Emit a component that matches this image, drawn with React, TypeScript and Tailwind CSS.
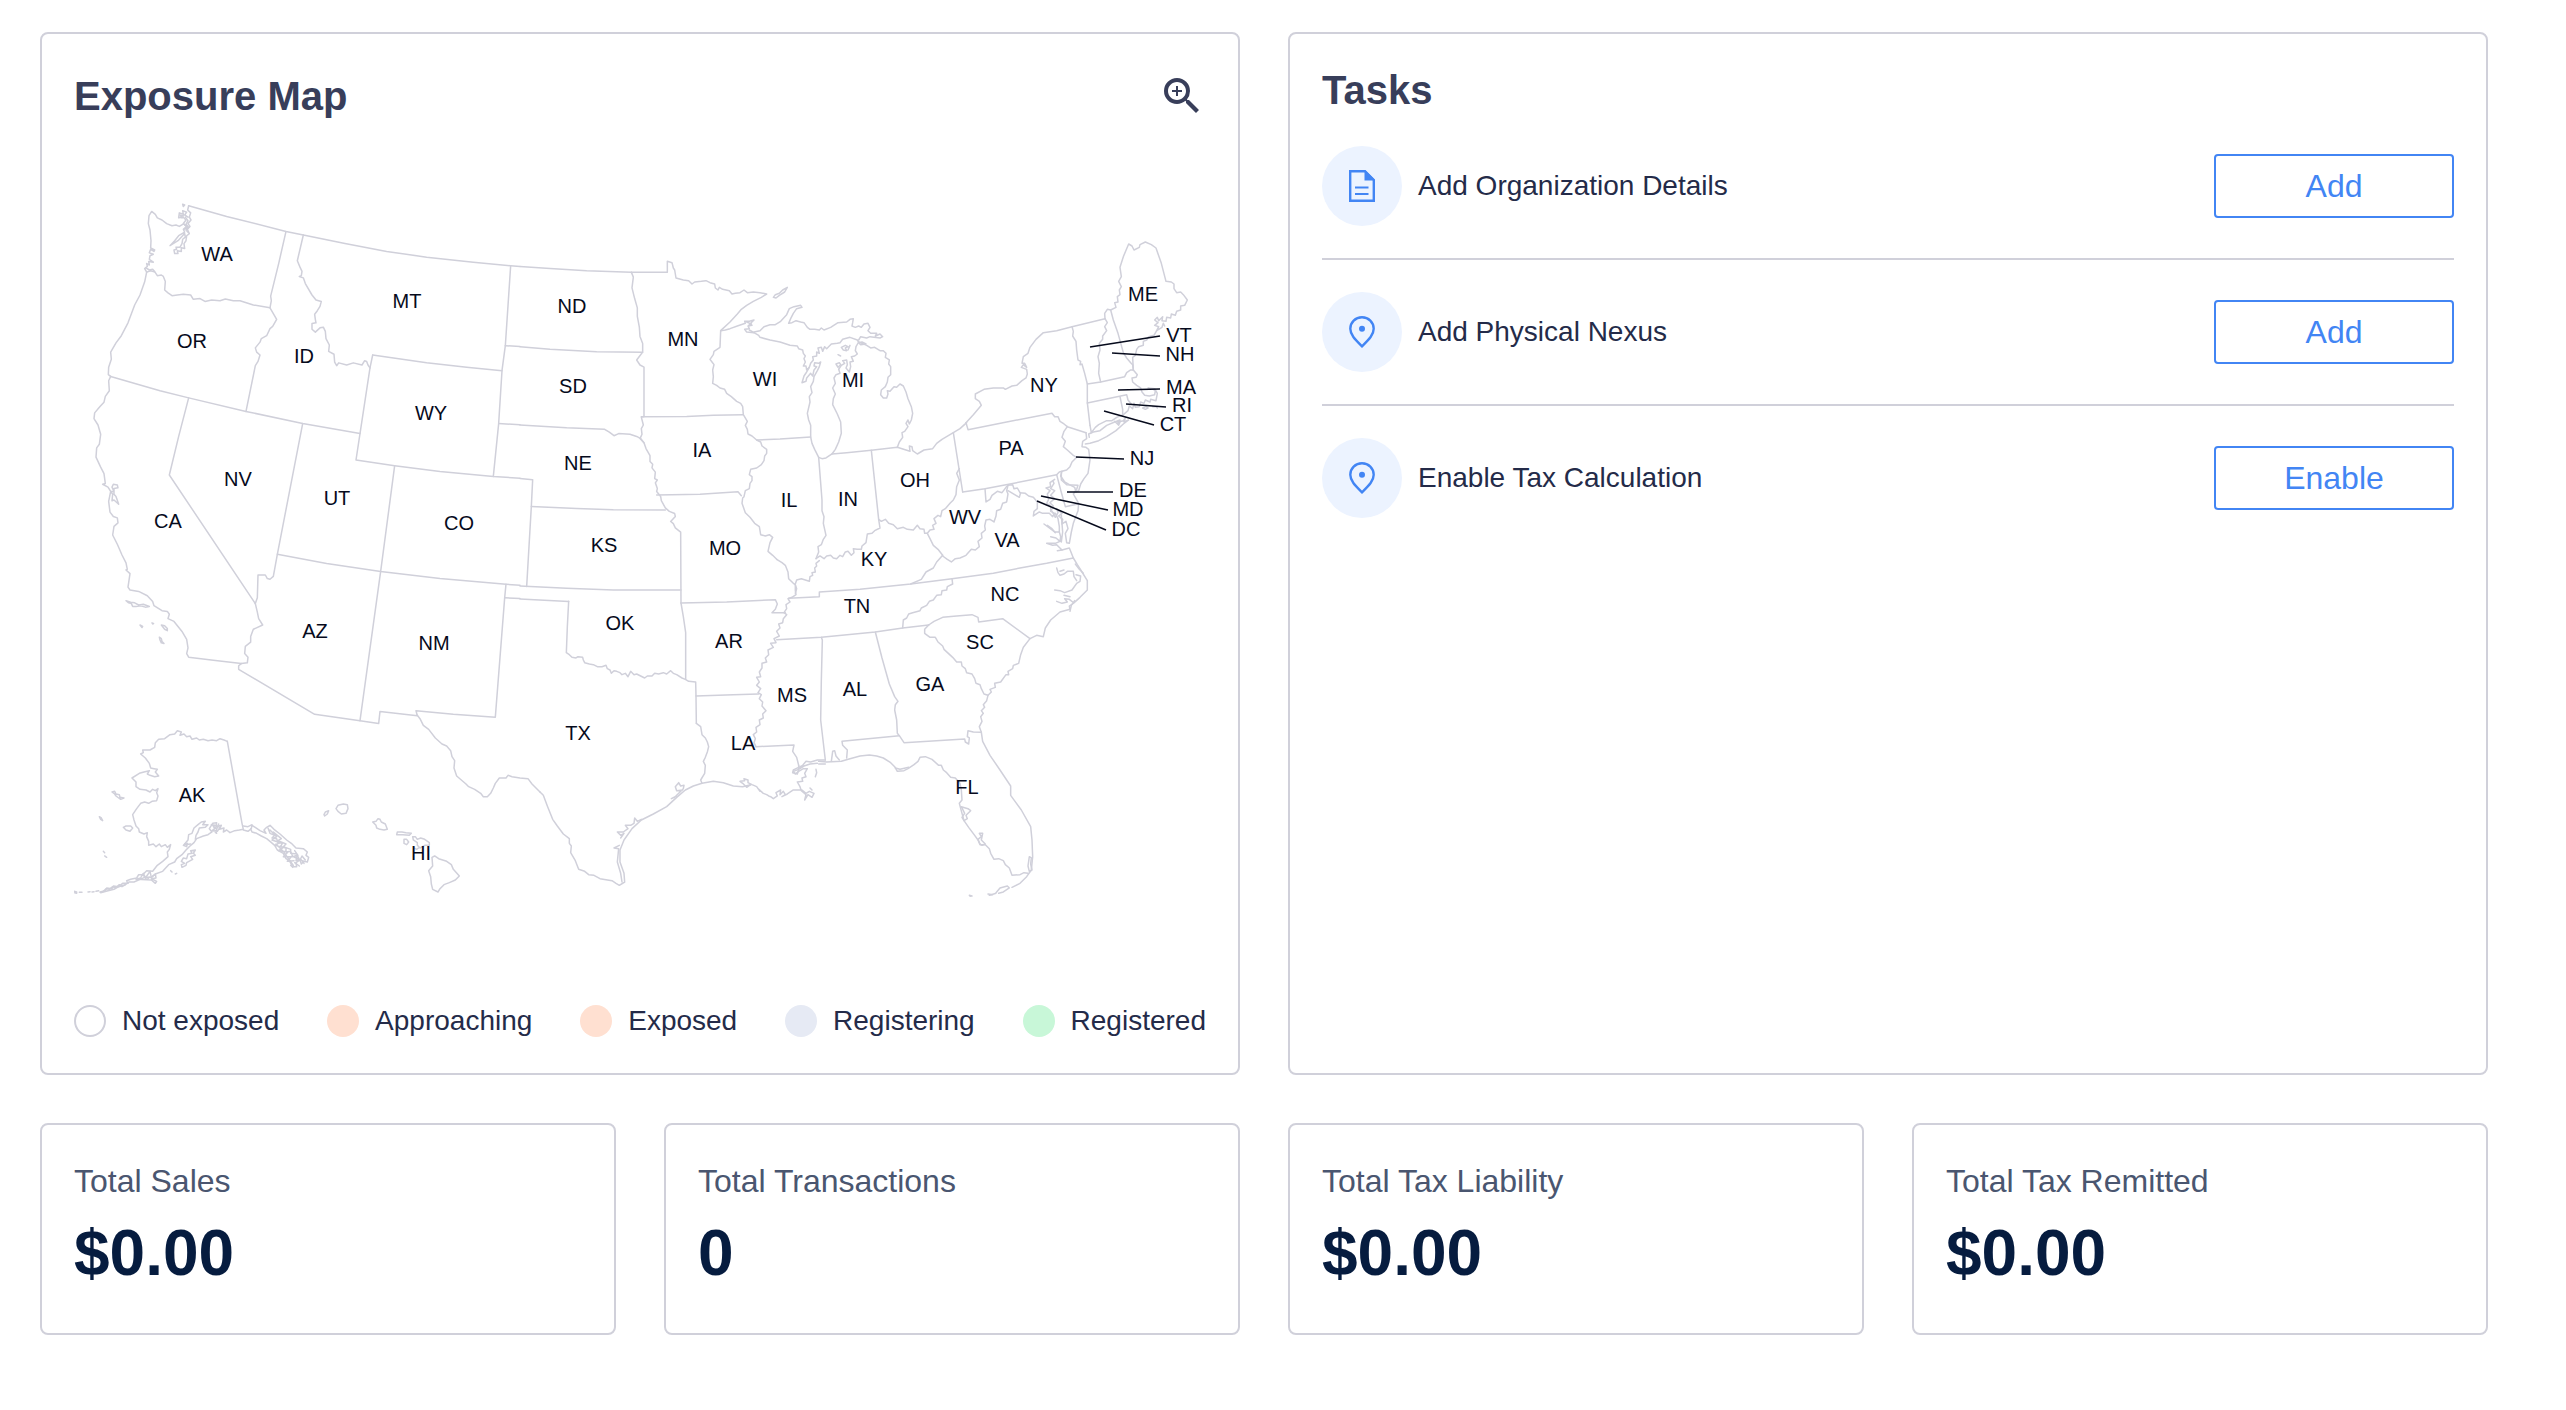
import type { ReactNode } from "react"
import { MdZoomIn } from "react-icons/md"

type Region = {
  name: string
  transform: string
  paths: string[]
}

type StateLabel = [code: string, x: number, y: number]

// Each region is drawn on its own grid and placed on the map by its transform.
const regions: Region[] = [
  {
    name: "west",
    transform: "matrix(0.33333 0 0 0.35714 40 180)",
    paths: [
      "M320 258L314 248 322 242 320 234 328 238 326 228 340 230 328 222 330 212 340 208 328 204 332 194 342 200 344 196 332 190 333 170 330 140 325 122 327 100 335 88 346 96 352 106 366 112 380 122 396 128 408 126 418 130 428 124",
      "M446 72L560 102 738 144 790 154 915 178 1040 200 1160 216 1300 230 1412 240 1440 242",
      "M446 72L443 84 452 92 448 104 453 112 444 122 450 130 442 138 448 150 440 156 438 170 432 178 434 192 424 190 424 200 412 198 414 206 404 206 402 196 410 194 408 188 420 188 426 178 428 166 436 160 434 150 414 170 390 184 404 170 416 156 434 146 430 138 440 130 430 122 438 112 430 104 416 106 418 92 430 96 428 86 440 90 434 98 444 104",
      "M428 68l6 2 -4 4zM420 98l10 2 -4 6zM436 104l8 10 -6 10 8 8 -8 8 6 6M432 124l10 8 -10 6",
      "M320 258L332 254 345 258 352 268 364 266 370 270 376 284 374 308 384 316 396 324 412 322 430 320 452 322 460 334 480 332 495 340 515 336 540 338 556 333 580 338 600 338 640 350 690 358",
      "M318 246l10 6 10 -2 6 6",
      "M738 144L716 234 692 325 694 338 690 358 700 374 710 390 698 410 690 416 680 436 664 444 660 454 646 470 650 482 660 490 654 508 646 520 618 648",
      "M320 258L314 285 300 322 284 350 264 400 244 436 228 456 212 482 214 502 206 524 205 545 212 550",
      "M212 550L360 590 446 610 618 648 788 682 960 710",
      "M212 550L206 562 208 590 196 606 192 622 180 634 164 652 162 668 174 686 182 712 178 740 170 750 168 776 182 804 192 822 196 850 188 852 204 860 212 872 206 900 210 930 220 942 232 946 234 960 222 970 218 994 232 1020 246 1050 258 1072 262 1090 258 1092 270 1102 264 1140 270 1148 296 1152 322 1164 338 1180 342 1192 366 1206 382 1208 388 1216 384 1228 402 1236 426 1264 440 1286 444 1310 440 1326 446 1336 520 1345 604 1354",
      "M212 872L222 872 216 860 220 852 232 854 234 862 222 864 222 880 228 886 236 908 222 896 216 898 218 880z",
      "M258 1178L272 1182 284 1184 296 1190 310 1188 328 1194 316 1196 302 1192 288 1194 278 1194 274 1186 266 1184z",
      "M300 1246l8 4 -2 3zM336 1240l5 2 -3 1zM364 1246l10 2 8 8 0 6 -8 -4zM358 1280l6 4 2 8 6 6 -8 -2 -4 -8z",
      "M446 610L416 718 388 826 646 1186",
      "M646 1186L652 1170 654 1106 676 1106 682 1116 690 1118 700 1110 712 1048 788 682",
      "M646 1186L652 1210 656 1228 668 1246 640 1258 632 1278 632 1294 616 1306 614 1326 624 1336 622 1352 604 1354 596 1360 596 1370 824 1496 960 1514 1016 1522 1020 1488 1132 1500 1128 1486 1240 1496 1366 1504 1394 1170 1398 1132",
      "M712 1048L860 1074 1022 1096 1200 1116 1398 1132 1440 1135",
      "M1064 800L1022 1096 960 1514",
      "M998 490L990 526 960 710 948 784 1064 800 1200 816 1360 830 1440 835",
      "M998 490L1160 512 1280 524 1386 534",
      "M1412 240L1396 464 1386 534 1376 682 1360 830",
      "M1396 464L1440 466M1376 682L1440 685M1394 1170L1440 1172",
      "M790 154L772 226 780 244 786 256 784 268 778 270 790 274 796 290 816 322 828 336 844 340 840 354 832 366 824 376 826 390 828 400 816 402 816 418 826 426 840 414 850 412 856 424 858 444 868 462 866 480 882 488 884 510 890 520 896 512 920 518 940 512 966 518 974 506 980 508 984 518 990 526",
    ],
  },
  {
    name: "plains",
    transform: "matrix(0.33333 0 0 0.35714 500 220)",
    paths: [
      "M60 130L150 136 260 142 394 146 502 146",
      "M60 355L150 362 290 369 428 370",
      "M394 146L400 160 396 190 404 220 412 246 412 270 418 300 420 326 428 346 428 370 418 382 410 392 420 406 432 412 432 550",
      "M424 551L560 550 640 547 728 545",
      "M60 574L200 582 314 586 328 594 342 604 356 598 390 600 410 606 422 612 432 624",
      "M432 550L424 552 430 574 424 584 426 600 420 612 432 624 438 640 450 660 450 676 458 684 456 694 466 706 464 724 472 728 466 736 472 752 470 760 482 774 484 786 496 806 508 816 524 822 526 830 512 844 520 850 526 862 542 874 543 1072",
      "M60 724L98 727 94 802 80 1026",
      "M94 802L230 808 340 811 496 812",
      "M60 1025L200 1031 340 1036 543 1036",
      "M60 1061L206 1068",
      "M470 770L600 768 714 761 724 772",
    ],
  },
  {
    name: "south",
    transform: "matrix(0.33333 0 0 0.33333 500 560)",
    paths: [
      "M206 124L202 200 199 278 208 284 216 292 228 294 234 290 248 292 250 300 254 308 268 312 280 314 292 320 306 320 318 316 322 326 330 330 334 340 342 332 350 334 360 338 366 344 376 340 384 350 392 334 402 344 410 342 422 348 434 354 442 348 456 348 464 340 476 342 490 338 500 342 512 332 520 340 530 344 546 354 556 358 566 364 587 366 588 408 589 490",
      "M543 129L550 170 557 218 557 358",
      "M588 408L700 404 776 402",
      "M589 490L602 500 606 524 616 534 622 546 626 560 622 576 616 592 610 604 616 616 614 640 602 660 606 670",
      "M543 129L680 126 826 119 832 132 826 148 816 158 856 158",
      "M886 74L886 92 888 104 876 112 864 116 870 126 858 134 860 146 852 158 860 164 850 176 848 188 836 192 840 204 830 214 838 228 822 236 828 248 812 250 820 262 804 270 806 284 796 294 800 306 786 310 786 324 778 336 782 350 770 352 778 366 770 376 782 386 774 398 784 404 778 416 788 426 786 438 798 452 788 462 790 474 778 480 780 494 768 502 770 516 760 524 766 536 762 548 768 560",
      "M768 560L882 555 878 574 890 592 896 616",
      "M120 696L130 706 142 738 158 778 172 798 190 822 208 836 208 850 214 858 212 878 226 902 236 928 254 934 266 944 282 946 300 956 336 962 348 970 358 976 374 966 372 940 360 906 360 870 372 840 396 806 424 780 460 762 500 740 530 712 556 690 580 678 606 670 640 664 670 668 700 678 728 680 752 674",
      "M548 690L530 692 526 680 536 668 542 678 552 676 550 686 524 712 514 716 530 708",
      "M424 778L412 784 404 774 402 790 392 796 376 796 384 806 370 816 352 816 362 826 372 820 362 834",
      "M358 856L342 864 356 866 352 906 362 940 366 966",
      "M752 674L740 682 728 670 720 664 734 662 732 656 744 660 744 668 756 674 770 680 780 694 774 686 790 700 800 704 806 708 812 710 820 716 832 708 828 698 842 690 840 704 850 694 856 704 846 710 862 702 880 690 906 690 918 700 928 694 942 700 936 712 924 704 914 720 918 704 904 692 900 680 892 666 908 664 906 654 918 650 914 640 922 626 910 626 896 634 886 642 880 634 896 628 896 616",
      "M948 628l2 10 -4 12M930 684l6 6",
    ],
  },
  {
    name: "southeast",
    transform: "matrix(0.33333 0 0 0.33333 760 540)",
    paths: [
      "M50 299L184 292 346 276 428 264 506 255",
      "M86 175L178 170 178 156 300 148 452 132 576 116 700 100 780 84 860 70 940 54",
      "M50 58L66 68 76 76 84 96 86 116 100 130 106 134 110 146 106 160",
      "M106 132L110 120 124 116 148 124 150 110 158 106 156 98 166 96 164 84 170 78 168 70 178 62",
      "M452 132L484 118 498 96 520 84 530 66 548 46",
      "M576 116L578 132 562 140 560 150 546 152 544 164 530 166 520 180 508 184 500 196 484 204 480 212 458 218 446 222 440 234 430 240 428 264",
      "M506 255L522 244 548 232 590 228 636 224 654 232 656 246 728 236 810 296",
      "M506 255L494 268 494 280 510 292 526 292 534 306 548 318 552 328 578 352 590 366 604 366 606 378 616 386 620 398 636 402 644 416 648 430 660 434 664 446 672 462 684 466",
      "M346 276L366 354 388 432 404 470 414 484 406 494 404 510 410 540 412 580 418 587 432 608 614 597 616 606 626 612 628 594 622 590 624 572 640 576 664 577",
      "M418 587L246 604 248 616 262 630 260 654",
      "M184 292L187 300 184 420 182 540 196 660",
      "M664 577L658 560 666 544 662 530 670 520 664 512 674 502 670 494 680 482 684 466 694 456 690 448 706 442 704 430 722 426 738 404 746 404 744 394 758 386 760 376 776 370 782 344 790 322 810 296 830 286 850 290 856 264 872 240 900 216 930 208 928 198 940 190 960 172 982 150 982 122 966 96 952 74 940 54",
      "M930 214L934 196 944 182M946 72L958 88 970 100",
      "M890 84L894 98 900 106 912 102 922 94 940 94M900 94L912 90M940 94L942 110 950 122M884 150L900 152 914 158 936 150 950 130 960 124 962 108 948 104M890 184L906 190 922 186 914 176 928 178 938 186M912 166L930 170",
      "M664 577L668 604 690 646 720 690 752 738 752 766 784 810 812 860 816 900 818 950 814 990 800 1010 780 1030 756 1042",
      "M808 950l6 4 -2 18 4 18 -8 4 -4 -16z",
      "M804 1000L792 998 780 1004 756 1006 748 984 736 974 730 962 716 956 702 958 692 940 688 926 676 914 660 914 654 900 644 886 626 862 612 842 606 820 598 790 606 780 604 750 600 730 586 714 572 712 560 698 550 690 544 676 536 676 516 658 496 650 480 652 474 664 462 674 444 686 432 692 412 694 404 680 392 668 370 654 350 648 328 645 300 648 270 656 244 664 200 666 176 664",
      "M406 684L420 688 446 682M612 842L606 832 614 820 604 800 624 806 632 812 618 826 622 836 612 842",
      "M660 912L654 898 664 890 658 880 668 880 664 900 676 912 666 916z",
      "M708 1058L720 1044 742 1038 748 1044 730 1056 716 1060M684 1062l14 2 -10 2M628 1066l8 2 -6 1M694 1064l14 -4",
      "M214 664L218 634 224 632 228 648 238 660M196 660L172 660 152 666 138 664 128 676 116 682 100 690 98 698 112 702 116 688 132 678 150 672 172 670M176 672l20 0",
    ],
  },
  {
    name: "lakes",
    transform: "matrix(0.33333 0 0 0.33333 620 240)",
    paths: [
      "M142 95L142 64 156 68 160 84 164 90 168 114 190 120 206 122 216 132 224 126 244 124 258 122 270 128 284 132 286 144 294 150 298 142 308 148 318 150 328 152 336 162 346 160 360 158 372 150 382 158 400 156 420 158 440 162 424 172 400 184 380 196 364 208 352 222 330 246 302 272",
      "M460 172L466 164 478 160 488 150 502 142 494 156 478 166 468 174z",
      "M302 272L316 270 330 266 352 258 376 250 374 244 388 244 402 240 392 250 396 256 384 258 388 266 374 268 380 276 402 278",
      "M380 246l10 4 -4 8 8 -6",
      "M388 270L402 278 416 286 420 292 450 300 480 306 510 316 532 318 536 326 548 330 550 340 556 348 552 356 556 366 550 378 558 378 560 390 568 382 572 370 580 360 578 350 590 348 590 336 598 340 594 324 604 322 608 334 614 320 620 326 634 312 652 310 660 308 668 298 690 292 712 300 718 310",
      "M568 382L560 396 552 408 546 428 558 424 560 414 572 400 578 408 582 390 590 380 582 378 584 368 596 370 602 366 598 380 592 392 582 410 580 424 572 440 576 458 568 470 570 486 562 520 566 540 572 556 572 591 576 610 584 628 596 652 606 656 618 654 636 642 646 628 656 606 664 580 662 546 652 522 638 494 640 476 646 462 638 444 646 430 642 414 648 404 660 400 656 388",
      "M402 276L420 272 432 260 450 254 466 254 482 244 500 224 508 206 522 200 542 196 546 202 530 206 520 220 512 236 506 250 516 248 528 242 542 246 552 248 562 262 570 268 584 268 598 270 604 264 612 270 632 262 654 248 680 246 690 238 700 236 698 248 696 258 706 262 716 258 724 262 732 252 744 250 750 262 744 272 752 280 770 280 766 288 780 282 788 290 780 294 750 290 740 294 722 290 716 300",
      "M664 322l12 -6 8 4 -8 4 4 8 -10 -2zM654 344l8 4M648 372l10 -4 4 6 -8 8zM690 316l-6 14",
      "M656 388L664 376 674 370 668 362 680 360 682 374 678 384 688 396 692 380 690 366 700 364 694 350 704 348 712 342 706 332 708 320 716 306 726 310 740 316 752 324 764 322 780 332 790 332 798 340 796 352 808 360 806 372 812 380 812 404 804 412 802 426 796 440 784 450 782 464 790 474 800 474 804 462 802 452 810 454 822 440 830 442 840 432 850 438 858 456 864 476 874 500 878 520 874 540 868 552 864 540 858 550 864 560 854 574 846 578 848 592 838 606 832 622",
      "M716 308l10 -2 12 6 -16 2z",
      "M636 642L680 638 754 631 832 622 846 626 858 630 870 634 868 618 876 620 878 632 892 642 912 630 938 626 950 610 966 598 1000 578 1020 566 1040 548",
      "M302 272L300 322 282 334 280 344 270 358 276 366 282 374 278 390 280 410 278 430 290 436 300 444 314 448 320 460 334 470 350 484 362 490 368 500 370 524",
      "M370 524L382 544 376 556 382 568 384 582 396 588 410 600 422 606 426 618 440 628 440 640 434 648 432 662 424 674 410 684 392 688 388 704 396 710 396 722 390 730 388 746 376 752 372 770 368 774 366 790 376 818 390 832 404 850 418 860 422 884 436 888 448 884 458 892 450 908 444 934 458 946 470 958",
      "M596 652L606 780 606 812 612 830 610 850 618 886 610 898 604 914 594 920 596 936 588 956",
      "M588 956L600 948 612 956 620 948 632 946 640 954 650 956 660 946 668 950 676 936 684 934 694 946 702 938 700 926 712 928 724 928 726 918 738 908 742 882 756 880 764 872 780 864 776 838",
      "M754 631L776 838 784 844 796 838 806 850 820 854 832 866 850 862 862 868 880 870 892 856 900 866 912 868 914 880 922 880",
      "M410 600L480 597 572 591",
      "M922 880L930 896 940 916 954 928 968 946",
      "M922 880L930 870 942 868 938 856 948 850 942 836 954 826 962 830 966 812 976 806 990 790 1000 780 1008 764 1010 740 1018 720 1010 700 1018 686",
      "M1000 578L1028 756",
    ],
  },
  {
    name: "northeast",
    transform: "matrix(0.33333 0 0 0.33333 860 220)",
    paths: [
      "M308 816L375 806 450 792 590 764",
      "M318 608L324 629 440 606 576 580 584 590 594 590 600 604 612 612 622 620 678 638",
      "M318 608L340 584 352 570 364 556 358 544 346 536 346 522 372 508 400 504 430 504 436 508 456 498 470 496 486 482 498 474 502 462 500 448 484 442 490 434 500 442 494 430 486 430 490 410 504 400 510 382 528 358 550 338 590 332 636 320 735 296",
      "M636 320L640 334 638 348 648 364 650 390 654 420 662 424 660 434 666 432 674 460 682 492 682 548 690 616",
      "M735 296L742 308 734 320 740 332 728 348 728 358 718 370 720 390 714 410 718 430 716 460 722 486",
      "M735 296L734 280 742 268 752 270 760 300 774 340 790 398 800 414 812 428 818 434 820 450",
      "M752 270L768 262 764 248 774 246 772 230 780 224 778 210 784 200 776 184 784 170 780 142 790 110 806 72 816 78 822 90 838 82 840 74 856 66 874 74 888 84 904 130 918 184 934 186 942 192 942 206 950 218 962 216 970 224 982 240 974 256 962 258 962 270 950 274 946 286 934 282 932 294 920 292 918 304 906 302 908 290 896 302 892 292 884 300 894 308 884 316 896 320 890 332 906 322 910 310 914 318",
      "M890 332L882 346 866 350 860 360 850 364 850 376 836 380 830 388 826 406 818 412 820 450",
      "M682 492L722 486 794 470 800 458 812 450 820 450",
      "M682 549L800 524 804 540 814 552",
      "M780 530L788 568 788 586",
      "M820 450L832 464 828 472 816 474 818 486 830 496 842 504 846 516 854 526 868 528 884 524 886 512 876 506 864 504 884 506 892 520 888 542 872 538 870 546 856 540 852 550 842 546 838 560 826 562 822 550 818 566 808 558 804 572 790 584 770 592 756 602 740 602 716 614 706 622 694 638 690 616",
      "M848 564l10 -4 6 4 -8 4zM878 560l10 0 4 4",
      "M688 652L686 642 700 636 720 632 740 616 764 606 780 600 774 606 790 602 796 594 792 606 806 600 790 612 768 632 740 650 716 662 690 670 676 672",
      "M764 604l6 6 10 -4 -4 10z",
      "M678 638L680 656 668 664 666 680 678 682 686 688 690 720 684 760 672 776 662 792 656 812 648 816 644 802 628 794 614 786 602 768 606 754 620 750 630 740 636 726 650 712 640 706 622 690 610 680 616 664 606 652 612 634 622 620",
      "M590 764L598 756 606 754M590 764L602 810 616 860 654 852",
      "M604 758L604 780 620 794 654 796 650 808 640 822 648 836 656 850 654 872 640 910 634 936 628 970 620 968 616 940 624 926 618 904 606 912 608 898 596 888 606 880 590 866 594 878 586 892 574 870 580 858 570 848 584 836 572 826 584 812 572 806 582 790 578 782",
      "M584 778L570 788 572 800 558 804 570 812 562 822 566 838 560 850 572 858 572 874 584 880 578 890 568 880 548 880 538 876 520 888 522 874 532 866 532 846 520 832 506 828 496 820 480 818 472 804 462 806 458 794 444 796",
      "M586 880L594 896 598 920 598 936 584 936 566 922 552 912",
      "M562 916l14 10 10 12",
      "M598 936L602 950 600 964 588 954 572 950M600 964L586 970 560 970 578 976 590 974 606 990 592 992M604 886l4 50 -4 30",
      "M606 990L628 984 640 1014",
      "M375 806L378 846 390 838 396 826 412 814 426 818 438 802 444 796",
      "M444 796L440 812 444 822 440 846 428 850 422 868 410 872 408 888 402 906 390 898 378 900 374 918 376 930 364 940 366 954 354 964 358 980 346 990 334 988 318 1006 300 1014 286 1016 274 1026 262 1018 248 1008",
      "M444 812L478 832 482 818",
    ],
  },
  {
    name: "noncontiguous",
    transform: "matrix(0.33333 0 0 0.33333 40 700)",
    paths: [
      "M1132 46L1140 56 1150 76 1166 88 1186 114 1206 132 1220 138 1232 152 1236 170 1244 182 1242 204 1250 228 1278 252 1286 260 1304 268 1322 280 1330 290 1342 290 1352 280 1360 264 1366 250 1378 234 1398 234 1404 226 1416 230 1440 234 1464 236 1476 252 1500 276",
      "M562 124L552 120 540 116 530 122 516 120 504 122 490 118 478 120 470 114 456 118 450 108 440 110 432 102 420 106 424 96 412 92 404 102 390 104 374 116 356 118 346 128 344 142 330 150 308 150 310 158 302 162 316 174 328 190 332 204 342 206 352 208 346 216 356 228 344 230 330 226 322 222 328 212 312 216 298 220 276 234 288 246 288 260 300 268 318 270 330 276 338 268 346 272 354 266 350 278 354 288 350 302 336 304 326 310 314 306 302 310 290 326 278 344 282 360 288 378 296 386 298 396 312 402 322 398 320 410 326 424 326 436 340 432 348 440 358 432 364 440 376 434 382 442 392 434 388 448 382 456 384 470 368 484 352 496 338 514 320 512 308 524 296 524 290 534 272 538 260 542 264 550 248 550 236 560 220 558 216 566 200 564 196 572 180 576",
      "M182 578L204 572 222 568 236 560 256 554 268 546 282 546 300 538 314 532 334 532 346 522 368 514 386 494 404 486 410 476 426 464 438 450 450 438 462 428 470 416 490 408 504 404 516 396 508 386 518 370 530 368 528 380 544 376 538 388 552 384 550 396 560 390 570 398 584 392 598 390 610 388 606 370 562 124",
      "M452 432L432 434 444 420 446 404 456 400 462 384 474 374 484 366 496 364 488 374 504 374 496 382 478 384 474 396 468 406 466 418",
      "M430 436l12 -6 -2 10zM514 374l14 10 -12 8 16 2 8 -12 -14 -6zM520 378l10 22M536 372l-10 26",
      "M424 484L430 474 440 476 444 462 456 460 452 452 466 450 460 460 466 466 452 470 458 478 440 488 438 496 426 502 424 494 434 490z",
      "M190 574l8 -8 10 2 10 -8 8 4 12 -10 8 6 10 -6M288 538l14 -4 6 -12 8 12 14 -20 4 18 12 -10 2 12 -14 2 16 8 -4 6 -12 -10zM310 520l10 20 8 -8",
      "M102 574l8 2 0 4 -6 -2M118 577l8 0M144 576l6 -1M156 576l6 -1M168 574l8 -2M392 512l4 4M406 522l4 -2",
      "M216 276l8 -2 4 8 10 2 2 8 12 2 -10 4 -6 -4 -8 -6 -4 -6zM178 350l6 4 4 8 -6 -4zM250 382l8 -4 14 0 6 6 -8 10 -12 -4zM190 454l4 4M194 468l6 4",
      "M610 378L624 380 636 374 634 386 624 394 610 390M636 376L648 384 660 392 678 400 672 390 680 382 690 376 702 388 720 402 740 420 754 430 768 444 790 446 802 456 798 466 806 472 802 486 792 484 784 492 780 480 768 488 770 500 758 500 748 482 738 476 730 460 712 450 704 436 690 424 680 416 664 408 650 400 636 396 632 386",
      "M684 384l6 16 14 6 -8 8 14 2 4 14 14 -2 -6 12 16 4 0 12 14 -2 6 16 14 -4 -4 16 14 -4 10 12M690 390l20 20 -14 10 24 8 -16 8 26 6 -14 10 28 4 -14 14 24 0 -12 14 20 -2M700 396l24 20 -10 6 24 10 -8 8 22 8 0 12 18 2 8 16 14 6M708 432l20 20 16 22 16 22M764 452l10 14 -14 4 20 10 6 -12 10 12M752 496l6 6M764 488l14 10",
      "M852 344l4 -8 10 -4 -4 10 -8 6zM888 326l6 -10 16 -4 12 2 2 12 -6 14 -14 2 -10 -8z",
      "M998 366l10 -2 6 -8 6 2 4 8 12 6 6 16 -10 2 -12 -2 -10 -4 -2 -8zM1072 396l14 0 12 2 16 2 -6 6 -20 -2 -18 0zM1092 418l8 0 6 8 -6 8 -8 -4zM1118 410l8 0 6 8 10 -4 12 4 14 10 0 8 -14 0 -14 8 -8 -8 0 -8 -12 -8z",
      "M1122 444l8 4 6 -4 M1176 472L1184 468 1196 476 1220 484 1234 494 1240 508 1258 528 1246 540 1228 548 1212 554 1200 566 1194 576 1178 568 1174 552 1172 530 1166 512 1178 498z",
    ],
  },
]

const stateLabels: StateLabel[] = [
  ["WA", 217, 261],
  ["OR", 192, 348],
  ["ID", 304, 363],
  ["MT", 407, 308],
  ["WY", 431, 420],
  ["NV", 238, 486],
  ["UT", 337, 505],
  ["CO", 459, 530],
  ["CA", 168, 528],
  ["AZ", 315, 638],
  ["NM", 434, 650],
  ["ND", 572, 313],
  ["SD", 573, 393],
  ["NE", 578, 470],
  ["KS", 604, 552],
  ["OK", 620, 630],
  ["TX", 578, 740],
  ["MN", 683, 346],
  ["IA", 702, 457],
  ["MO", 725, 555],
  ["AR", 729, 648],
  ["LA", 743, 750],
  ["WI", 765, 386],
  ["IL", 789, 507],
  ["IN", 848, 506],
  ["MI", 853, 387],
  ["OH", 915, 487],
  ["KY", 874, 566],
  ["TN", 857, 613],
  ["MS", 792, 702],
  ["AL", 855, 696],
  ["GA", 930, 691],
  ["FL", 967, 794],
  ["SC", 980, 649],
  ["NC", 1005, 601],
  ["VA", 1007, 547],
  ["WV", 965, 524],
  ["PA", 1011, 455],
  ["NY", 1044, 392],
  ["ME", 1143, 301],
  ["AK", 192, 802],
  ["HI", 421, 860],
  ["VT", 1179, 342],
  ["NH", 1180, 361],
  ["MA", 1181, 394],
  ["RI", 1182, 412],
  ["CT", 1173, 431],
  ["NJ", 1142, 465],
  ["DE", 1133, 497],
  ["MD", 1128, 516],
  ["DC", 1126, 536],
]

// Lines from the small eastern states out to their labels.
const leaders = [
  "M1090 347L1160 336",
  "M1112 353L1160 356",
  "M1118 390L1160 389",
  "M1126 404L1166 407",
  "M1104 411L1154 425",
  "M1076 457L1124 459",
  "M1067 492L1113 492",
  "M1041 496L1108 510",
  "M1037 501L1106 530",
]

const legend = [
  { label: "Not exposed", dot: "border-2 border-[#d0d0da] bg-white" },
  { label: "Approaching", dot: "bg-[#ffe0d1]" },
  { label: "Exposed", dot: "bg-[#ffe0d1]" },
  { label: "Registering", dot: "bg-[#e6eaf4]" },
  { label: "Registered", dot: "bg-[#c8f7d8]" },
]

const tasks = [
  { title: "Add Organization Details", action: "Add", icon: <DocumentIcon /> },
  { title: "Add Physical Nexus", action: "Add", icon: <PinIcon /> },
  { title: "Enable Tax Calculation", action: "Enable", icon: <PinIcon /> },
]

const stats = [
  { label: "Total Sales", value: "$0.00" },
  { label: "Total Transactions", value: "0" },
  { label: "Total Tax Liability", value: "$0.00" },
  { label: "Total Tax Remitted", value: "$0.00" },
]

function DocumentIcon() {
  return (
    <svg viewBox="0 0 26 32" className="w-[26px] h-8" fill="none" stroke="currentColor" strokeWidth="2.4" aria-hidden="true">
      <path d="M1.2 1.2H16L24.8 10V30.8H1.2Z" />
      <path d="M6 17.5H19.5M6 24H19.5" strokeWidth="2.2" />
      <path d="M15.5 0.5V10.5H25.5V9.5L16.5 0.5Z" fill="currentColor" stroke="none" />
    </svg>
  )
}

function PinIcon() {
  return (
    <svg viewBox="0 0 26 32" className="w-[26px] h-8" fill="none" stroke="currentColor" strokeWidth="2.4" aria-hidden="true">
      <path d="M13 1.3C6.4 1.3 1.3 6.4 1.3 12.8C1.3 18.6 5.6 22.9 13 30.3C20.4 22.9 24.7 18.6 24.7 12.8C24.7 6.4 19.6 1.3 13 1.3Z" />
      <circle cx="13" cy="12.8" r="3" fill="currentColor" stroke="none" />
    </svg>
  )
}

function Card({ className = "", children }: { className?: string; children: ReactNode }) {
  return <section className={`rounded-lg border-2 border-[#d0d0da] bg-white p-8 ${className}`}>{children}</section>
}

function UsMap() {
  return (
    <svg viewBox="74 126 1132 875" className="block w-full" role="img" aria-label="Exposure by state">
      <g fill="none" stroke="#d0d0da" strokeWidth="1.5" strokeLinejoin="round" strokeLinecap="round">
        {regions.map((region) => (
          <g key={region.name} transform={region.transform}>
            {region.paths.map((d) => (
              <path key={d} d={d} vectorEffect="non-scaling-stroke" />
            ))}
          </g>
        ))}
      </g>
      <g stroke="#060a1c" strokeWidth="1.5">
        {leaders.map((d) => (
          <path key={d} d={d} />
        ))}
      </g>
      <g fill="#060a1c" fontSize="20" textAnchor="middle">
        {stateLabels.map(([code, x, y]) => (
          <text key={code} x={x} y={y}>
            {code}
          </text>
        ))}
      </g>
    </svg>
  )
}

export default function App() {
  return (
    <main
      className="min-h-screen bg-white pt-8 pb-[75px] pl-10 pr-[78px] text-[#242b49]"
      style={{ fontFamily: '"Liberation Sans", Arial, sans-serif' }}
    >
      <div className="grid grid-cols-2 gap-12">
        <Card>
          <div className="flex h-[60px] items-center justify-between">
            <h2 className="text-[40px] leading-[48px] font-bold text-[#383e5a]">Exposure Map</h2>
            <button type="button" aria-label="Zoom in" className="text-[#383e5a]">
              <MdZoomIn size={48} />
            </button>
          </div>
          <UsMap />
          <ul className="flex items-center justify-between">
            {legend.map((item) => (
              <li key={item.label} className="flex items-center gap-4 text-[28px] leading-10">
                <span className={`size-8 rounded-full ${item.dot}`} />
                {item.label}
              </li>
            ))}
          </ul>
        </Card>

        <Card>
          <h2 className="text-[40px] leading-[48px] font-bold text-[#383e5a]">Tasks</h2>
          <ul className="divide-y-2 divide-[#d0d0da]">
            {tasks.map((task) => (
              <li key={task.title} className="flex items-center gap-4 py-8">
                <span className="flex size-20 items-center justify-center rounded-full bg-[#ecf3ff] text-[#4285f4]">
                  {task.icon}
                </span>
                <span className="flex-1 text-[28px] leading-10">{task.title}</span>
                <button
                  type="button"
                  aria-label={`${task.action}: ${task.title}`}
                  className="h-16 w-60 rounded border-2 border-[#4285f4] text-[32px] leading-10 text-[#4285f4]"
                >
                  {task.action}
                </button>
              </li>
            ))}
          </ul>
        </Card>
      </div>

      <dl className="mt-12 grid grid-cols-4 gap-12">
        {stats.map((stat) => (
          <div key={stat.label} className="rounded-lg border-2 border-[#d0d0da] bg-white p-8">
            <dt className="text-[32px] leading-[48px] text-[#4a5670]">{stat.label}</dt>
            <dd className="text-[64px] leading-[96px] font-bold text-[#061c3f]">{stat.value}</dd>
          </div>
        ))}
      </dl>
    </main>
  )
}
